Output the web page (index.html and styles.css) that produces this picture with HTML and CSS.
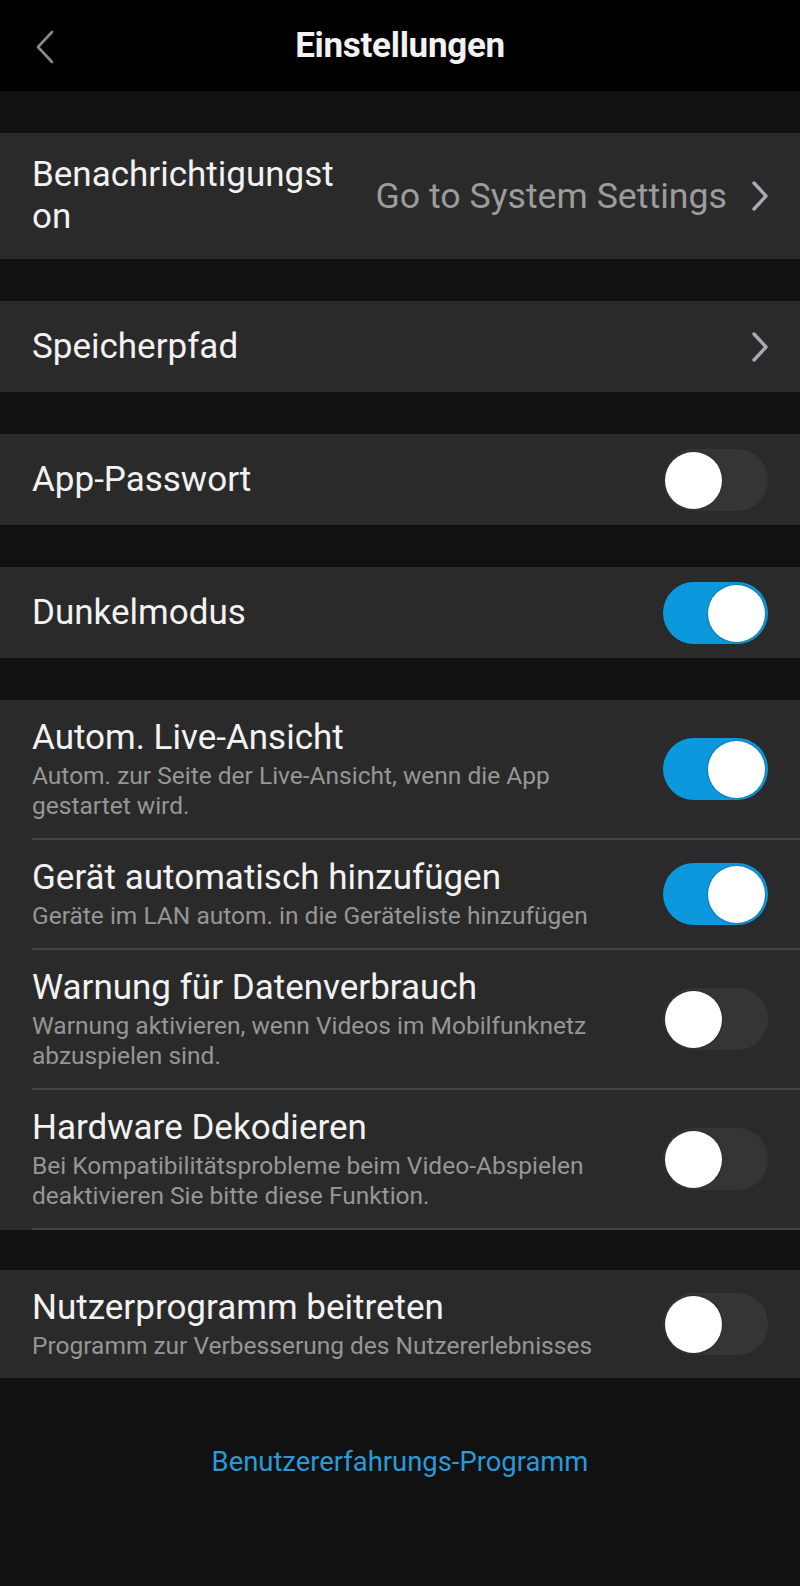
FILE: index.html
```html
<!DOCTYPE html>
<html lang="de">
<head>
    <meta charset="UTF-8">
    <meta name="viewport" content="width=device-width, initial-scale=1.0">
    <title>Einstellungen</title>
    <link rel="stylesheet" href="styles.css">
</head>
<body>
    <header class="topbar">
        <svg class="back" width="22" height="34" viewBox="0 0 22 34">
            <path d="M18 2 L4 17 L18 32" fill="none" stroke="#8a8a8a" stroke-width="2.6" stroke-linecap="round" stroke-linejoin="round"/>
        </svg>
        <h1>Einstellungen</h1>
    </header>

    <main>
        <div class="group">
            <div class="row row-tall">
                <span class="label label-wrap">Benachrichtigungston</span>
                <span class="value">Go to System Settings</span>
                <svg class="chevron" width="20" height="32" viewBox="0 0 20 32">
                    <path d="M4 3 L16 16 L4 29" fill="none" stroke="#a9a9b8" stroke-width="3.4" stroke-linecap="round" stroke-linejoin="round"/>
                </svg>
            </div>
        </div>

        <div class="group">
            <div class="row">
                <span class="label">Speicherpfad</span>
                <svg class="chevron" width="20" height="32" viewBox="0 0 20 32">
                    <path d="M4 3 L16 16 L4 29" fill="none" stroke="#a9a9b8" stroke-width="3.4" stroke-linecap="round" stroke-linejoin="round"/>
                </svg>
            </div>
        </div>

        <div class="group">
            <div class="row">
                <span class="label">App-Passwort</span>
                <span class="switch"><span class="knob"></span></span>
            </div>
        </div>

        <div class="group">
            <div class="row">
                <span class="label">Dunkelmodus</span>
                <span class="switch on"><span class="knob"></span></span>
            </div>
        </div>

        <div class="group">
            <div class="row row-desc lined">
                <div class="text">
                    <div class="label">Autom. Live-Ansicht</div>
                    <div class="desc">Autom. zur Seite der Live-Ansicht, wenn die App gestartet wird.</div>
                </div>
                <span class="switch on"><span class="knob"></span></span>
            </div>
            <div class="row row-desc lined">
                <div class="text">
                    <div class="label">Gerät automatisch hinzufügen</div>
                    <div class="desc">Geräte im LAN autom. in die Geräteliste hinzufügen</div>
                </div>
                <span class="switch on"><span class="knob"></span></span>
            </div>
            <div class="row row-desc lined">
                <div class="text">
                    <div class="label">Warnung für Datenverbrauch</div>
                    <div class="desc">Warnung aktivieren, wenn Videos im Mobilfunknetz abzuspielen sind.</div>
                </div>
                <span class="switch"><span class="knob"></span></span>
            </div>
            <div class="row row-desc lined">
                <div class="text">
                    <div class="label">Hardware Dekodieren</div>
                    <div class="desc">Bei Kompatibilitätsprobleme beim Video-Abspielen deaktivieren Sie bitte diese Funktion.</div>
                </div>
                <span class="switch"><span class="knob"></span></span>
            </div>
        </div>

        <div class="group group-last">
            <div class="row row-desc">
                <div class="text">
                    <div class="label">Nutzerprogramm beitreten</div>
                    <div class="desc">Programm zur Verbesserung des Nutzererlebnisses</div>
                </div>
                <span class="switch"><span class="knob"></span></span>
            </div>
        </div>

        <a class="link" href="#">Benutzererfahrungs-Programm</a>
    </main>
</body>
</html>
```

FILE: styles.css
```css
body {
    font-family: Roboto, "Noto Sans", Arial, sans-serif;
    margin: 0;
    padding: 0;
    background-color: #111111;
    color: #f2f2f2;
    min-height: 1586px;
}

.topbar {
    height: 91px;
    background-color: #000;
    display: flex;
    align-items: center;
    justify-content: center;
    position: relative;
}

.topbar h1 {
    margin: 0;
    font-size: 35px;
    font-weight: bold;
    color: #f2f2f2;
    letter-spacing: -0.3px;
}

.back {
    position: absolute;
    left: 34px;
    top: 30px;
}

main {
    display: flex;
    flex-direction: column;
}

.group {
    margin-top: 42px;
    background-color: #2a2a2a;
}

.group-last {
    margin-top: 40px;
}

.row {
    display: flex;
    align-items: center;
    min-height: 91px;
    padding: 0 32px;
    box-sizing: border-box;
}

.row-tall {
    min-height: 126px;
}

.label {
    font-size: 35px;
    line-height: 42px;
    color: #f2f2f2;
}

.label-wrap {
    width: 312px;
    word-break: break-all;
}

.value {
    margin-left: auto;
    font-size: 35.7px;
    color: #9c9c9c;
}

.chevron {
    margin-left: auto;
    margin-right: -2px;
}

.value + .chevron {
    margin-left: 23px;
}

.row-desc {
    padding-top: 17px;
    padding-bottom: 17px;
    margin-left: 32px;
    padding-left: 0;
}

.lined {
    border-bottom: 2px solid #444446;
}

.text {
    flex: 1;
    padding-right: 40px;
}

.desc {
    font-size: 24.5px;
    line-height: 30px;
    color: #969696;
    margin-top: 2px;
}

.switch {
    margin-left: auto;
    flex: none;
    width: 105px;
    height: 62px;
    border-radius: 31px;
    background-color: #353537;
    position: relative;
}

.switch .knob {
    position: absolute;
    top: 3px;
    left: 2px;
    width: 57px;
    height: 57px;
    border-radius: 50%;
    background-color: #fff;
    box-shadow: 0 0 2px rgba(0, 0, 0, 0.5);
}

.switch.on {
    background-color: #0b98dc;
}

.switch.on .knob {
    left: auto;
    right: 3px;
}

.link {
    margin-top: 68px;
    align-self: center;
    font-size: 27.4px;
    color: #2a9ad6;
    text-decoration: none;
}
```
